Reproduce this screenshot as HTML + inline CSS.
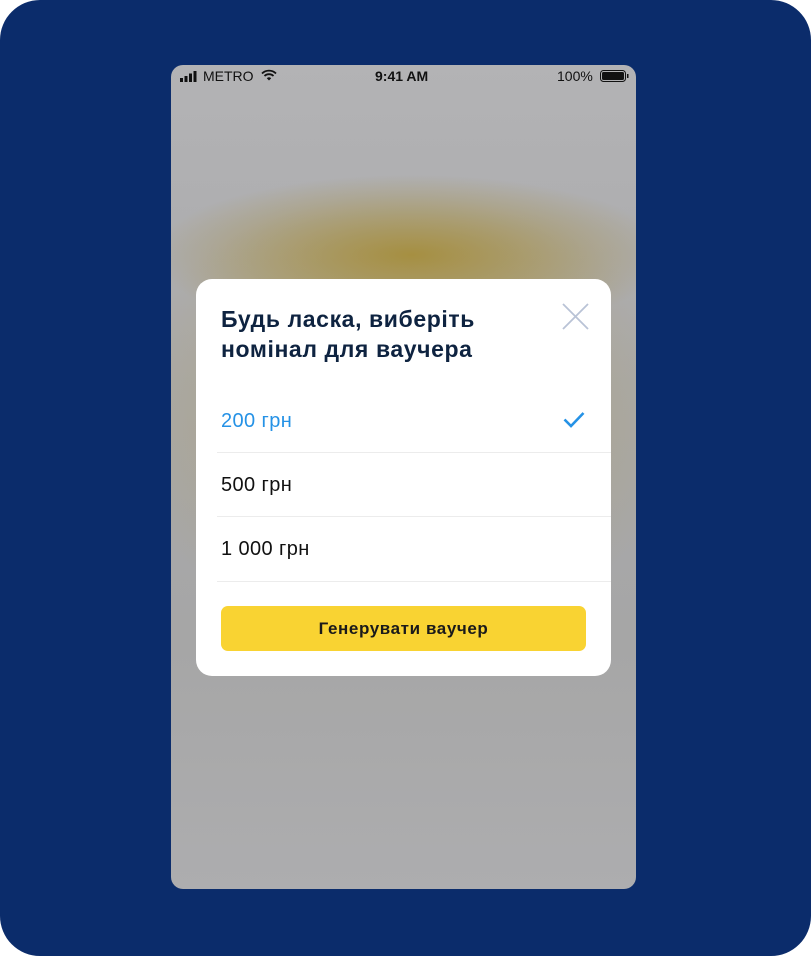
<!DOCTYPE html>
<html><head><meta charset="utf-8"><style>
html,body{margin:0;padding:0;background:#fff;}
body{width:811px;height:956px;position:relative;overflow:hidden;font-family:"Liberation Sans","DejaVu Sans",sans-serif;}
.outer{position:absolute;left:0;top:0;width:811px;height:956px;background:#0b2c6b;border-radius:40px;}
.phone{position:absolute;left:171px;top:65px;width:465px;height:824px;border-radius:12px;overflow:hidden;
background:
radial-gradient(ellipse 260px 80px at 240px 190px, rgba(165,140,55,0.9), rgba(165,140,55,0) 100%),
radial-gradient(ellipse 290px 220px at 230px 350px, rgba(175,160,105,0.8), rgba(175,160,105,0) 100%),
linear-gradient(#b3b3b5,#a9a9ab 40%,#a6a6a6 70%,#adadaf);}
.sb{position:absolute;top:0;left:0;right:0;height:22px;font-size:14px;color:#111;}
.modal{position:absolute;left:196px;top:279px;width:415px;height:397px;background:#fff;border-radius:16px;}
.title{position:absolute;left:25px;top:25px;font-size:23px;letter-spacing:0.6px;font-weight:bold;color:#0e2340;line-height:30px;}
.row{position:absolute;left:25px;font-size:20px;letter-spacing:0.4px;color:#111;}
.sep{position:absolute;left:21px;right:0;height:1px;background:#ececec;}
.btn{position:absolute;left:25px;top:327px;width:365px;height:45px;background:#f9d332;border-radius:7px;text-align:center;line-height:45px;font-size:17px;letter-spacing:0.6px;font-weight:bold;color:#1a1a1a;}
</style></head><body>
<div class="outer"></div>
<div class="phone">
 <div class="sb">
  <svg style="position:absolute;left:9px;top:6px" width="20" height="11"><rect x="0" y="7" width="3" height="4" fill="#111"/><rect x="4.5" y="5" width="3" height="6" fill="#111"/><rect x="9" y="2.5" width="3" height="8.5" fill="#111"/><rect x="13.5" y="0" width="3" height="11" fill="#111"/></svg>
  <span style="position:absolute;left:32px;top:3px">METRO</span>
  <svg style="position:absolute;left:90px;top:4px" width="16" height="12" viewBox="0 0 16 12"><path d="M1 4.5A10 10 0 0 1 15 4.5" stroke="#111" stroke-width="1.8" fill="none"/><path d="M3.5 7A6.5 6.5 0 0 1 12.5 7" stroke="#111" stroke-width="1.8" fill="none"/><path d="M8 11.5L5.8 9.2A3 3 0 0 1 10.2 9.2Z" fill="#111"/></svg>
  <span style="position:absolute;left:204px;top:3px;font-weight:bold">9:41 AM</span>
  <span style="position:absolute;left:386px;top:3px">100%</span>
  <svg style="position:absolute;left:429px;top:5px" width="30" height="13"><rect x="0.5" y="0.5" width="25" height="11" rx="3" fill="none" stroke="#111"/><rect x="2" y="2" width="22" height="8" rx="1.5" fill="#111"/><rect x="27" y="4" width="1.5" height="4" fill="#111"/></svg>
 </div>
</div>
<div class="modal">
 <div class="title">Будь ласка, виберіть<br>номінал для ваучера</div>
 <svg style="position:absolute;left:366px;top:24px" width="27" height="27"><path d="M1 1L26 26M26 1L1 26" stroke="#b9c3d6" stroke-width="1.8"/></svg>
 <div class="row" style="top:131px;color:#2592e6">200 грн</div>
 <svg style="position:absolute;left:367px;top:132px" width="22" height="17"><path d="M1.5 8.5L8 15L20.5 2" stroke="#2592e6" stroke-width="2.6" fill="none"/></svg>
 <div class="sep" style="top:173px"></div>
 <div class="row" style="top:195px">500 грн</div>
 <div class="sep" style="top:237px"></div>
 <div class="row" style="top:259px">1 000 грн</div>
 <div class="sep" style="top:302px"></div>
 <div class="btn">Генерувати ваучер</div>
</div>
</body></html>
